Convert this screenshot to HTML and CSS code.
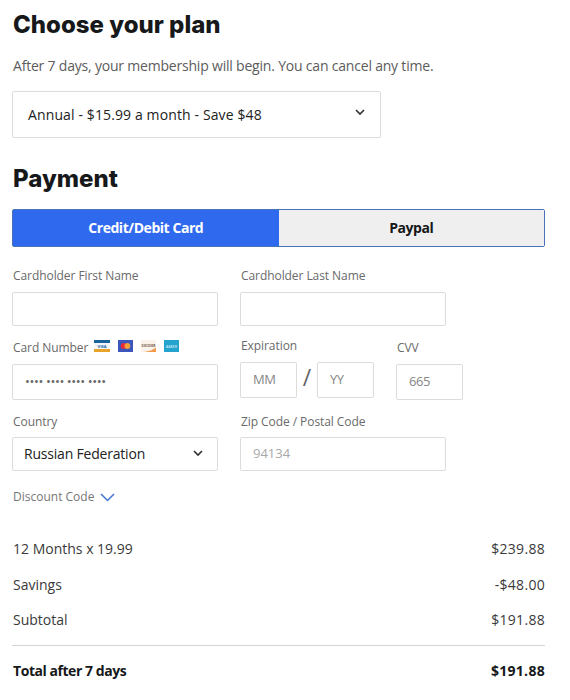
FILE: index.html
```html
<!DOCTYPE html>
<html lang="en">
<head>
    <meta charset="UTF-8">
    <meta name="viewport" content="width=device-width, initial-scale=1.0">
    <title>Choose your plan</title>
    <link rel="stylesheet" href="styles.css">
</head>
<body>
    <main class="checkout">
        <!-- Plan -->
        <h1 class="plan-title">Choose your plan</h1>
        <p class="intro">After 7 days, your membership will begin. You can cancel any time.</p>
        <button type="button" class="select plan-select">
            <span class="plan-name">Annual - $15.99 a month - Save $48</span>
            <svg class="chevron" width="10" height="7" viewBox="0 0 10 7"><path d="M1 1l4 4 4-4"/></svg>
        </button>

        <!-- Payment -->
        <h2 class="payment-title">Payment</h2>
        <div class="tabs">
            <button type="button" class="tab active"><span class="card-tab">Credit/Debit Card</span></button>
            <button type="button" class="tab"><span class="paypal-tab">Paypal</span></button>
        </div>

        <form class="payment-form">
            <div class="row">
                <div class="field">
                    <label for="firstName">Cardholder First Name</label>
                    <input type="text" id="firstName">
                </div>
                <div class="field">
                    <label for="lastName">Cardholder Last Name</label>
                    <input type="text" id="lastName">
                </div>
            </div>

            <div class="row card-row">
                <div class="field card-field">
                    <div class="card-label">
                        <label for="cardNumber">Card Number</label>
                        <div class="cards">
                            <svg width="16" height="12" viewBox="0 0 16 12">
                                <rect width="16" height="12" fill="#f4f7f9"/>
                                <rect width="16" height="3" fill="#17639c"/>
                                <rect y="9" width="16" height="3" fill="#e9a32b"/>
                                <text x="8" y="7.7" class="brand visa">VISA</text>
                            </svg>
                            <svg width="15" height="12" viewBox="0 0 15 12">
                                <rect width="15" height="12" fill="#3b57bd"/>
                                <circle cx="5.6" cy="6" r="2.9" fill="#e52b3c"/>
                                <circle cx="9.4" cy="6" r="2.9" fill="#f6a13a"/>
                            </svg>
                            <svg width="15" height="12" viewBox="0 0 15 12">
                                <rect width="15" height="12" fill="#fbf3e9"/>
                                <path d="M15 7.5V12H3q8-1 12-4.500z" fill="#f09a4a"/>
                                <text x="7.500" y="6.800" class="brand discover">DISCOVER</text>
                            </svg>
                            <svg width="15" height="12" viewBox="0 0 15 12">
                                <rect width="15" height="12" fill="#24a3cf"/>
                                <text x="7.500" y="7.800" class="brand amex">AMEX</text>
                            </svg>
                        </div>
                    </div>
                    <input type="text" id="cardNumber" class="card-number" placeholder="•••• •••• •••• ••••">
                </div>
                <div class="field expiration">
                    <label for="month">Expiration</label>
                    <div class="dates">
                        <input type="text" id="month" placeholder="MM">
                        <span class="slash">/</span>
                        <input type="text" id="year" placeholder="YY">
                    </div>
                </div>
                <div class="field cvv">
                    <label for="cvv">CVV</label>
                    <input type="text" id="cvv" placeholder="665">
                </div>
            </div>

            <div class="row country-row">
                <div class="field">
                    <label for="country">Country</label>
                    <button type="button" id="country" class="select country-select">
                        <span class="country-name">Russian Federation</span>
                        <svg class="chevron" width="10" height="7" viewBox="0 0 10 7"><path d="M1 1l4 4 4-4"/></svg>
                    </button>
                </div>
                <div class="field zip">
                    <label for="zip">Zip Code / Postal Code</label>
                    <input type="text" id="zip" placeholder="94134">
                </div>
            </div>

            <a class="discount">
                <span>Discount Code</span>
                <svg width="15" height="9" viewBox="0 0 15 9"><path d="M1 1l6.500 6.500L14 1"/></svg>
            </a>
        </form>

        <!-- Order summary -->
        <div class="summary">
            <div class="line"><span>12 Months x 19.99</span><span class="amount">$239.88</span></div>
            <div class="line"><span>Savings</span><span class="amount">-$48.00</span></div>
            <div class="line"><span>Subtotal</span><span class="amount">$191.88</span></div>
            <div class="line total"><span>Total after 7 days</span><span class="amount">$191.88</span></div>
        </div>
    </main>
</body>
</html>
```
FILE: styles.css
```css
* {
    box-sizing: border-box;
    margin: 0;
    padding: 0;
}

body {
    font-family: "Open Sans", sans-serif;
    font-size: 14px;
    color: #333;
    background: #fff;
    overflow: hidden;
}

button,
input {
    font: inherit;
    color: inherit;
}

.checkout {
    width: 545px;
    padding: 9px 0 0 12px;
}

h1,
h2 {
    padding-left: 1px;
    font-family: Inter, sans-serif;
    font-size: 24px;
    font-weight: 800;
    line-height: 32px;
    color: #16181a;
}

.intro {
    margin-top: 15px;
    padding-left: 1px;
    line-height: 20px;
    letter-spacing: -0.2px;
    color: #5c5c5c;
    white-space: nowrap;
}

.select {
    display: flex;
    align-items: center;
    justify-content: space-between;
    background: #fff;
    border: 1px solid #dcdcdc;
    border-radius: 2px;
    color: #222;
    white-space: nowrap;
}

.plan-select {
    width: 369px;
    height: 47px;
    margin-top: 15px;
    padding: 0 15px 1px 15px;
}

.plan-name {
    letter-spacing: 0.12px;
}

.chevron {
    fill: none;
    stroke: #333;
    stroke-width: 1.7;
}

.plan-select .chevron {
    margin-bottom: 3px;
}

.payment-title {
    margin-top: 25px;
}

.tabs {
    display: flex;
    height: 38px;
    margin-top: 14px;
    border: 1px solid #4a72b8;
    border-radius: 2px;
}

.tab {
    flex: 1;
    border: none;
    padding-bottom: 2px;
    background: #efefef;
    font-weight: 700;
    letter-spacing: -0.45px;
    color: #16181a;
}

.tab.active {
    background: #2f69ee;
    color: #fff;
}

.payment-form {
    margin-top: 19px;
}

.row {
    display: flex;
    gap: 22px;
}

.field {
    width: 206px;
}

label {
    display: block;
    padding-left: 1px;
    font-size: 12px;
    line-height: 20px;
    letter-spacing: -0.07px;
    color: #6a6a6a;
    white-space: nowrap;
}

input {
    display: block;
    width: 100%;
    height: 34px;
    margin-top: 6px;
    padding: 0 12px;
    border: 1px solid #dcdcdc;
    border-radius: 2px;
    background: #fff;
    font-size: 13px;
}

input::placeholder {
    color: #868686;
}

.card-row {
    margin-top: 10px;
}

.card-field,
.cvv {
    padding-top: 2px;
}

.card-row input {
    height: 36px;
    padding-bottom: 2px;
    letter-spacing: -0.4px;
}

.card-number::placeholder {
    color: #666;
}

.card-label {
    display: flex;
    align-items: center;
    gap: 6px;
}

.cards {
    display: flex;
    gap: 8px;
    margin-top: -5px;
}

.brand {
    font-size: 4px;
    font-weight: 700;
    text-anchor: middle;
}

.visa {
    fill: #17639c;
}

.discover {
    font-size: 2.8px;
    fill: #6b5148;
}

.amex {
    fill: #b9e2f0;
}

.expiration {
    width: 134px;
}

.dates {
    display: flex;
    align-items: center;
    justify-content: space-between;
}

.dates input {
    width: 57px;
}

.slash {
    font-size: 23px;
    line-height: 24px;
    color: #666;
}

.cvv {
    width: 67px;
}

.country-row {
    margin-top: 12px;
}

.country-select {
    width: 100%;
    height: 34px;
    margin-top: 5px;
    padding: 0 14px 2px 11px;
}

.country-name {
    letter-spacing: -0.2px;
}

.zip input {
    margin-top: 5px;
    padding-bottom: 2px;
}

.zip input::placeholder {
    color: #a8a8a8;
}

.discount {
    display: flex;
    align-items: center;
    gap: 6px;
    margin-top: 16px;
    padding-left: 1px;
    font-size: 12px;
    line-height: 20px;
    color: #777;
}

.discount svg {
    fill: none;
    stroke: #3f74cf;
    stroke-width: 1.5;
}

.summary {
    margin-top: 24px;
}

.line {
    display: flex;
    justify-content: space-between;
    padding-left: 1px;
    line-height: 35.5px;
    color: #3a3a3a;
}

.amount {
    letter-spacing: 0.3px;
}

.total {
    margin-top: 7px;
    border-top: 1px solid #d5d5d5;
    line-height: 50px;
    font-weight: 700;
    letter-spacing: -0.45px;
    color: #16181a;
}
```
